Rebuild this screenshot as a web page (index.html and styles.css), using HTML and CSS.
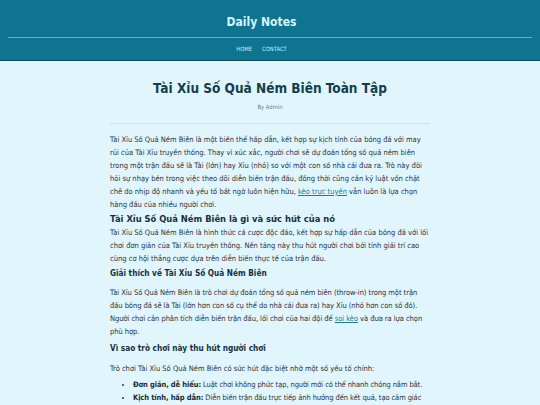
FILE: index.html
```html
<!DOCTYPE html>
<html lang="vi">
<head>
<meta charset="utf-8">
<title>Daily Notes</title>
<link rel="stylesheet" href="styles.css">
</head>
<body>
<header class="site-header">
  <div class="brand">Daily Notes</div>
  <nav class="nav">
    <a href="#">HOME</a>
    <a href="#">CONTACT</a>
  </nav>
</header>
<main class="content">
  <div class="post-head">
    <h1 class="post-title">Tài Xỉu Số Quả Ném Biên Toàn Tập</h1>
    <div class="byline">By Admin</div>
  </div>
  <article class="post-body">
    <p>Tài Xỉu Số Quả Ném Biên là một biến thể hấp dẫn, kết hợp sự kịch tính của bóng đá với may rủi của Tài Xỉu truyền thống. Thay vì xúc xắc, người chơi sẽ dự đoán tổng số quả ném biên trong một trận đấu sẽ là Tài (lớn) hay Xỉu (nhỏ) so với một con số nhà cái đưa ra. Trò này đòi hỏi sự nhạy bén trong việc theo dõi diễn biến trận đấu, đồng thời cũng cần kỷ luật vốn chặt chẽ do nhịp độ nhanh và yếu tố bất ngờ luôn hiện hữu, <a href="#">kèo trực tuyến</a> vẫn luôn là lựa chọn hàng đầu của nhiều người chơi.</p>
    <h2>Tài Xỉu Số Quả Ném Biên là gì và sức hút của nó</h2>
    <p>Tài Xỉu Số Quả Ném Biên là hình thức cá cược độc đáo, kết hợp sự hấp dẫn của bóng đá với lối chơi đơn giản của Tài Xỉu truyền thống. Nền tảng này thu hút người chơi bởi tính giải trí cao cùng cơ hội thắng cược dựa trên diễn biến thực tế của trận đấu.</p>
    <h3 class="sub-first">Giải thích về Tài Xỉu Số Quả Ném Biên</h3>
    <p class="snug">Tài Xỉu Số Quả Ném Biên là trò chơi dự đoán tổng số quả ném biên (throw-in) trong một trận đấu bóng đá sẽ là Tài (lớn hơn con số cụ thể do nhà cái đưa ra) hay Xỉu (nhỏ hơn con số đó). Người chơi cần phân tích diễn biến trận đấu, lối chơi của hai đội để <a href="#">soi kèo</a> và đưa ra lựa chọn phù hợp.</p>
    <h3 class="sub-next">Vì sao trò chơi này thu hút người chơi</h3>
    <p>Trò chơi Tài Xỉu Số Quả Ném Biên có sức hút đặc biệt nhờ một số yếu tố chính:</p>
    <ul class="tight">
      <li><strong>Đơn giản, dễ hiểu:</strong> Luật chơi không phức tạp, người mới có thể nhanh chóng nắm bắt.</li>
      <li><strong>Kịch tính, hấp dẫn:</strong> Diễn biến trận đấu trực tiếp ảnh hưởng đến kết quả, tạo cảm giác hồi hộp cho người chơi trong suốt trận.</li>
    </ul>
  </article>
</main>
</body>
</html>
```
FILE: styles.css
```css
* { box-sizing: border-box; }
html, body { margin: 0; padding: 0; }
body {
  background: #e1f5fc;
  font-family: "DejaVu Sans Condensed", "DejaVu Sans", sans-serif;
  color: #2b3440;
}
.site-header {
  background: #0e7490;
  border-bottom: 1px solid #0b4a5c;
  padding: 0 8px;
  text-align: center;
}
.brand {
  color: #d6f6fb;
  font-size: 12px;
  font-weight: bold;
  height: 38px;
  line-height: 45px;
  padding-right: 17px;
  border-bottom: 1px solid #5bb5cf;
}
.nav {
  display: flex;
  justify-content: center;
  gap: 10px;
  height: 22px;
  padding-right: 17px;
  align-items: center;
}
.nav a {
  color: #cdeef6;
  text-decoration: none;
  font-size: 5.8px;
}
.content {
  width: 320px;
  margin: 0 auto;
}
.post-head {
  text-align: center;
  padding: 17px 0 13px;
  border-bottom: 1px solid #c7e3ee;
}
.post-title {
  margin: 0;
  font-size: 13.5px;
  line-height: 20px;
  color: #133e4d;
}
.byline {
  margin-top: 6px;
  font-size: 5.8px;
  color: #6b7d88;
}
.post-body {
  padding-top: 9px;
  font-size: 7.5px;
  line-height: 13px;
}
.post-body p { margin: 0; }
.post-body .snug { letter-spacing: -0.05px; }
.post-body .tight { letter-spacing: -0.1px; }
.post-body a { color: #1a7fa0; }
.post-body h2 {
  font-size: 9.3px;
  margin: 1.5px 0 1.5px;
  color: #16313c;
  line-height: 12px;
}
.post-body h3 {
  font-size: 8.2px;
  color: #16313c;
  line-height: 12px;
}
.post-body .sub-first { margin: 1.5px 0 7px; }
.post-body .sub-next { margin: 4px 0 8px; }
.post-body ul { margin: 3.9px 0 0; padding-left: 23px; }
.post-body strong { color: #1d2a33; }
```
